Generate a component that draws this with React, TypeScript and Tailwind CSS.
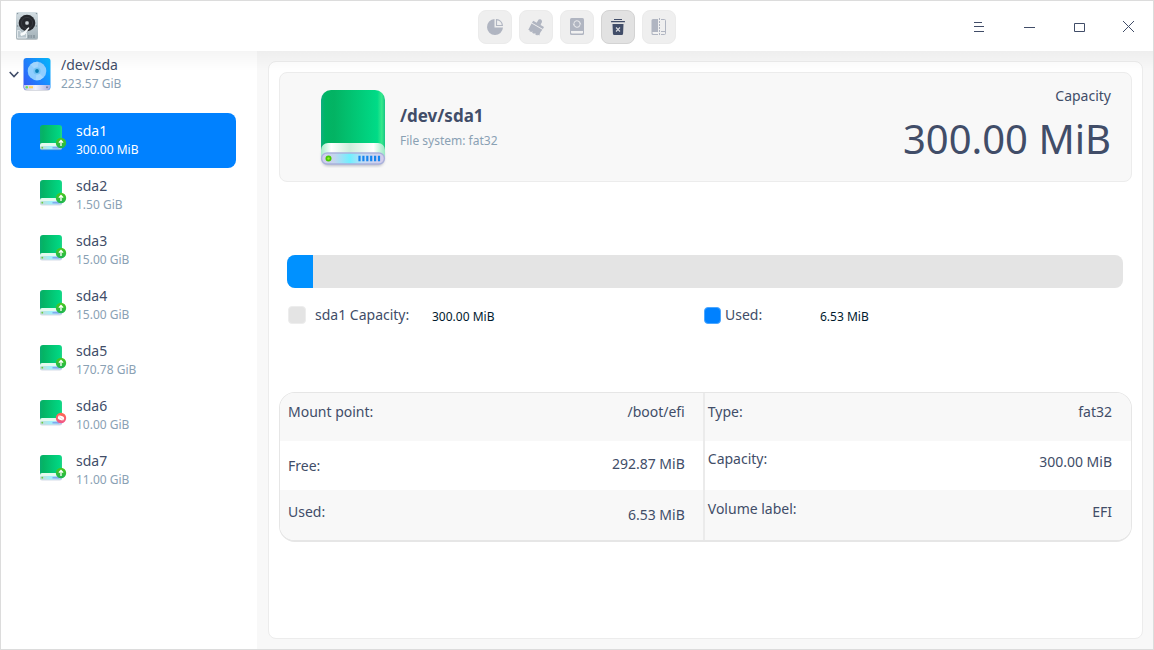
import React from "react";

type Status = "mounted" | "hidden";

interface Partition {
  name: string;
  size: string;
  status: Status;
}

const partitions: Partition[] = [
  { name: "sda1", size: "300.00 MiB", status: "mounted" },
  { name: "sda2", size: "1.50 GiB", status: "mounted" },
  { name: "sda3", size: "15.00 GiB", status: "mounted" },
  { name: "sda4", size: "15.00 GiB", status: "mounted" },
  { name: "sda5", size: "170.78 GiB", status: "mounted" },
  { name: "sda6", size: "10.00 GiB", status: "hidden" },
  { name: "sda7", size: "11.00 GiB", status: "mounted" },
];

function AppLogo() {
  return (
    <svg width="24" height="30" viewBox="0 0 24 30" aria-hidden="true">
      <defs>
        <linearGradient id="logo-case" x1="0" y1="0" x2="0" y2="1">
          <stop offset="0" stopColor="#d3dde2" />
          <stop offset="1" stopColor="#a3b1b8" />
        </linearGradient>
      </defs>
      <rect x="1" y="2" width="22" height="27" rx="2" fill="#7f8b92" opacity=".5" />
      <rect x="1" y="1" width="22" height="27" rx="2" fill="url(#logo-case)" />
      <g fill="#7f8d95">
        <circle cx="2.6" cy="2.6" r=".7" />
        <circle cx="21.4" cy="2.6" r=".7" />
        <circle cx="2.6" cy="15" r=".7" />
        <circle cx="21.4" cy="15" r=".7" />
      </g>
      <circle cx="12" cy="12" r="8.3" fill="#25272c" />
      <circle cx="12" cy="12" r="5.6" fill="none" stroke="#3b3e44" strokeWidth=".8" />
      <circle cx="12" cy="12" r="2" fill="#aeb4b9" />
      <circle cx="12" cy="12" r=".8" fill="#f2f4f5" />
      <path d="M2.500 19.500h2l2 2.500h5v5h-9z" fill="#b9c6cd" stroke="#eef3f5" strokeWidth=".8" />
      <path d="M13.400 16.300l1 .8-4.600 6.600-3.700 1.200-1-2.200 3.600-1.700z" fill="#f8fbfc" />
      <path d="M13 24h7v3h-7z" fill="#8d9ba3" />
      <path d="M15 24v3M17.500 24v3" stroke="#b5c1c7" strokeWidth=".6" />
    </svg>
  );
}

function DiskIcon() {
  return (
    <svg width="30" height="36" viewBox="0 0 30 36" aria-hidden="true">
      <defs>
        <linearGradient id="disk-body" x1="0" y1="1" x2="1" y2="0.200">
          <stop offset="0" stopColor="#3a52f2" />
          <stop offset=".55" stopColor="#1b86ff" />
          <stop offset="1" stopColor="#08b2ff" />
        </linearGradient>
        <linearGradient id="disk-base" x1="0" y1="0" x2="1" y2="0">
          <stop offset="0" stopColor="#c5c4e8" />
          <stop offset=".45" stopColor="#f1f2fb" />
          <stop offset="1" stopColor="#a9aee0" />
        </linearGradient>
      </defs>
      <rect x="2" y="4" width="26" height="31" rx="3" fill="#67708a" opacity=".25" />
      <rect x="1.500" y="2" width="27" height="32" rx="3" fill="url(#disk-body)" />
      <path d="M2 29h26v2a3 3 0 0 1-3 3H5a3 3 0 0 1-3-3z" fill="url(#disk-base)" />
      <circle cx="4.800" cy="31.300" r="1.200" fill="#6ade62" />
      <path d="M7 30.300h4v2H7z" fill="#ffd25a" />
      <circle cx="25" cy="31.300" r="1" fill="#777fa8" />
      <circle cx="15" cy="15" r="9.300" fill="#8fceff" />
      <path d="M15 15L8.500 8.400a9.300 9.300 0 0 1 8-2.600zM15 15l6.500 6.600a9.300 9.300 0 0 1-8 2.600z" fill="#a5d8ff" />
      <circle cx="15" cy="15" r="3.600" fill="#73c3f4" />
      <circle cx="15" cy="15" r="1.900" fill="#0a7fb7" />
    </svg>
  );
}

function PartitionIcon({ id }: { id: string }) {
  return (
    <svg width="68" height="82" viewBox="0 0 68 82" aria-hidden="true">
      <defs>
        <linearGradient id={`${id}-body`} x1="0" y1="0" x2="1" y2="0">
          <stop offset="0" stopColor="#0fae80" />
          <stop offset=".06" stopColor="#00b565" />
          <stop offset=".2" stopColor="#03b363" />
          <stop offset=".88" stopColor="#00db87" />
          <stop offset=".95" stopColor="#38e88d" />
          <stop offset="1" stopColor="#16c684" />
        </linearGradient>
        <linearGradient id={`${id}-lip`} x1="0" y1="0" x2="1" y2="0">
          <stop offset="0" stopColor="#a5ecc8" />
          <stop offset=".16" stopColor="#ffffff" />
          <stop offset=".45" stopColor="#ceeedd" />
          <stop offset=".82" stopColor="#ffffff" />
          <stop offset="1" stopColor="#98eac3" />
        </linearGradient>
        <linearGradient id={`${id}-base`} x1="0" y1="0" x2="1" y2="0">
          <stop offset="0" stopColor="#d3cdea" />
          <stop offset=".2" stopColor="#c4d5ee" />
          <stop offset=".45" stopColor="#6ff0ff" />
          <stop offset=".65" stopColor="#c3dcf4" />
          <stop offset="1" stopColor="#d5cbea" />
        </linearGradient>
        <filter id={`${id}-blur`}>
          <feGaussianBlur stdDeviation="1.500" />
        </filter>
      </defs>
      <rect x="3" y="60" width="62" height="18" rx="6" fill="#596078" opacity=".4" filter={`url(#${id}-blur)`} />
      <path d="M12 2h44a10 10 0 0 1 10 10v57H2V12A10 10 0 0 1 12 2z" fill={`url(#${id}-body)`} />
      <path d="M9 55h50a7 7 0 0 1 7 7v8H2v-8a7 7 0 0 1 7-7z" fill={`url(#${id}-lip)`} />
      <rect x="2.600" y="65" width="62.800" height="11" rx="5.500" fill={`url(#${id}-base)`} stroke="#a9b1dc" strokeWidth="1.400" />
      <circle cx="9.500" cy="70.500" r="3" fill="#45c900" />
      <circle cx="9.500" cy="70.500" r="1.200" fill="#93ef2b" />
      <path d="M40.500 67.700v5.600M44.400 67.700v5.600M48.300 67.700v5.600M52.200 67.700v5.600M56.100 67.700v5.600M60 67.700v5.600" stroke="#1685ee" strokeWidth="2.200" />
    </svg>
  );
}

function SmallPartitionIcon({ id, status }: { id: string; status: Status }) {
  return (
    <svg width="30" height="30" viewBox="0 0 30 30" aria-hidden="true">
      <defs>
        <linearGradient id={`${id}-body`} x1="0" y1="0" x2="1" y2="0">
          <stop offset="0" stopColor="#08ad70" />
          <stop offset=".15" stopColor="#05b464" />
          <stop offset=".9" stopColor="#00d783" />
          <stop offset="1" stopColor="#2ad489" />
        </linearGradient>
        <linearGradient id={`${id}-base`} x1="0" y1="0" x2="1" y2="0">
          <stop offset="0" stopColor="#c5ddd5" />
          <stop offset=".5" stopColor="#a0f0fb" />
          <stop offset="1" stopColor="#b5c9f1" />
        </linearGradient>
        <linearGradient id={`${id}-badge`} x1="0" y1="0" x2="0" y2="1">
          <stop offset="0" stopColor={status === "mounted" ? "#4cc81c" : "#ff6a4f"} />
          <stop offset="1" stopColor={status === "mounted" ? "#1db653" : "#f0568a"} />
        </linearGradient>
      </defs>
      <rect x="2" y="23" width="22" height="4.500" rx="2" fill="#7583b0" opacity=".3" />
      <path d="M5 2h16a3 3 0 0 1 3 3v18H2V5a3 3 0 0 1 3-3z" fill={`url(#${id}-body)`} />
      <path d="M4 20h18a2 2 0 0 1 2 2v2H2v-2a2 2 0 0 1 2-2z" fill="#e5faef" />
      <rect x="2" y="23" width="22" height="3.600" rx="1.600" fill={`url(#${id}-base)`} />
      <circle cx="4.300" cy="24.700" r=".9" fill="#6bcb3e" />
      <path d="M14.500 24.700h6.500" stroke="#82a9ef" strokeWidth="1.500" />
      <circle cx="23" cy="20" r="5.200" fill={`url(#${id}-badge)`} />
      {status === "mounted" ? (
        <path d="M23 23v-5.200M20.900 19.600L23 17.500l2.100 2.100" fill="none" stroke="#fff" strokeWidth="1.300" />
      ) : (
        <g>
          <ellipse cx="23" cy="20" rx="3.200" ry="2.200" fill="#fff" transform="rotate(20 23 20)" />
          <path d="M20.500 18l5 4" stroke="#fbc9cc" strokeWidth=".8" />
        </g>
      )}
    </svg>
  );
}

function PieIcon() {
  return (
    <svg width="18" height="18" viewBox="0 0 18 18" aria-hidden="true">
      <path d="M8.500 1A8 8 0 1 0 17 9.500H8.500z" fill="currentColor" />
      <path d="M10.500 1.600v5.900h5.900a6.300 6.300 0 0 0-5.900-5.900z" fill="none" stroke="currentColor" strokeWidth="1.100" />
    </svg>
  );
}

function BrushIcon() {
  return (
    <svg width="18" height="18" viewBox="0 0 18 18" fill="currentColor" aria-hidden="true">
      <path d="M11 2.200a2.100 2.100 0 0 1 4 .9c0 .9-.5 1.400-.9 2.200l-.5 1.300 3.400 2-1.100 2L5 4.400l1.200-2 3.500 2z" transform="translate(0 .3)" />
      <path d="M4.600 5.600l10.800 6.200c-1.500 1.700-2.600 3-3 5.700l-1.500-.7-.7.700-2.100-1.200.5-1.400-1.600.9-1.900-1.100.7-1.200-1.700.6-1.900-1.100.6-1-1.500-.1C2.200 10 3.500 8 4.600 5.600z" />
    </svg>
  );
}

function FormatIcon() {
  return (
    <svg width="18" height="18" viewBox="0 0 18 18" aria-hidden="true">
      <path d="M3.500 0h11A1.500 1.500 0 0 1 16 1.500v14a1.500 1.500 0 0 1-1.500 1.500h-11A1.500 1.500 0 0 1 2 15.500v-14A1.500 1.500 0 0 1 3.500 0z" fill="currentColor" />
      <path d="M3 13h12v1.500a1 1 0 0 1-1 1H4a1 1 0 0 1-1-1z" fill="#f1f1f1" />
      <circle cx="9" cy="6" r="3.200" fill="none" stroke="#e6e7ea" strokeWidth="1.100" strokeDasharray="8.500 1.550" transform="rotate(-160 9 6)" />
      <path d="M4.600 5.500l1.200 1.800 1.200-1.800zM11 6.500l1.200-1.800 1.200 1.800z" fill="#e6e7ea" />
    </svg>
  );
}

function TrashIcon() {
  return (
    <svg width="18" height="18" viewBox="0 0 18 18" fill="currentColor" aria-hidden="true">
      <path d="M5 1h8v1H5zM2 3.500A.5.5 0 0 1 2.500 3h13a.5.5 0 0 1 .5.5V4.200H2z" />
      <path d="M3.500 6h11l-.4 9.500a1.500 1.500 0 0 1-1.500 1.500H5.400a1.500 1.500 0 0 1-1.500-1.500z" />
      <path d="M7 9.500l4 4M11 9.500l-4 4" stroke="#d9dbe0" strokeWidth="1.100" />
    </svg>
  );
}

function ResizeIcon() {
  return (
    <svg width="18" height="18" viewBox="0 0 18 18" aria-hidden="true">
      <path d="M3 1h5v16H3a1.500 1.500 0 0 1-1.500-1.500v-13A1.500 1.500 0 0 1 3 1z" fill="currentColor" />
      <path d="M2.500 14H8v2H3.500a1 1 0 0 1-1-1z" fill="#f1f1f1" />
      <path d="M9.500 0v18" stroke="currentColor" strokeDasharray="2 1" />
      <path d="M11 1.500h3.500a1 1 0 0 1 1 1v13a1 1 0 0 1-1 1H11M11 13.500h4" fill="none" stroke="currentColor" />
    </svg>
  );
}

const tools = [
  { label: "Partition", icon: <PieIcon />, enabled: false },
  { label: "Wipe", icon: <BrushIcon />, enabled: false },
  { label: "Format", icon: <FormatIcon />, enabled: false },
  { label: "Unmount", icon: <TrashIcon />, enabled: true },
  { label: "Resize", icon: <ResizeIcon />, enabled: false },
];

const windowControls = [
  { label: "Menu", path: "M2 1.500h8M2 5.500h10M2 10.500h10" },
  { label: "Minimize", path: "M2 6.500h11" },
  { label: "Maximize", path: "M2.500 2.500h10v8h-10z" },
  { label: "Close", path: "M1 0l11 11M12 0L1 11" },
];

const cell = "align-middle font-normal";
const labelLeft = "w-[24.9%] pl-2 text-left";
const valueLeft = "w-[24.9%] pr-[18px] text-right";
const labelRight = "w-[25.1%] border-l-2 border-[#ebebeb] pl-[3px] text-left";
const valueRight = "w-[25.1%] pr-[19px] text-right";

export default function App() {
  return (
    <div className="flex min-h-screen flex-col border border-[#dcdcdc] bg-white font-['Noto_Sans',sans-serif] text-sm text-[#414d68]">
      <header className="grid h-[50px] grid-cols-[1fr_auto_1fr] items-center">
        <div className="pl-3.5">
          <AppLogo />
        </div>
        <div className="flex gap-[7px] pt-0.5" role="toolbar" aria-label="Disk actions">
          {tools.map((tool) => (
            <button
              key={tool.label}
              type="button"
              aria-label={tool.label}
              disabled={!tool.enabled}
              className={
                tool.enabled
                  ? "flex size-[34px] items-center justify-center rounded-lg border border-[#d3d3d3] bg-[#e2e2e2] text-[#414d68]"
                  : "flex size-[34px] items-center justify-center rounded-lg border border-[#ebebeb] bg-[#efefef] text-[#b0b5c1]"
              }
            >
              {tool.icon}
            </button>
          ))}
        </div>
        <div className="flex justify-end">
          {windowControls.map((control) => (
            <button
              key={control.label}
              type="button"
              aria-label={control.label}
              className="flex h-[50px] w-[50px] items-center justify-center pt-0.5"
            >
              <svg width="13" height="13" viewBox="0 0 13 13" fill="none" stroke="currentColor" className="overflow-visible" aria-hidden="true">
                <path d={control.path} />
              </svg>
            </button>
          ))}
        </div>
      </header>

      <div className="relative flex flex-1">
        <nav className="w-64 shrink-0 pr-[21px] pl-2.5" aria-label="Devices">
          <button type="button" className="mb-4 flex h-[46px] w-full items-center text-left" aria-expanded="true">
            <svg width="10" height="7" viewBox="0 0 10 7" fill="none" stroke="currentColor" strokeWidth="1.600" className="-ml-0.5" aria-hidden="true">
              <path d="M.7 1L5 5.500 9.300 1" />
            </svg>
            <span className="ml-[3px]">
              <DiskIcon />
            </span>
            <span className="ml-[9px] flex flex-col">
              <span className="leading-[19px]">/dev/sda</span>
              <span className="text-xs leading-[19px] text-[#8aa1b4]">223.57 GiB</span>
            </span>
          </button>
          <ul>
            {partitions.map((partition, index) => (
              <li key={partition.name}>
                <button
                  type="button"
                  aria-current={index === 0}
                  className={
                    index === 0
                      ? "flex h-[55px] w-full items-center rounded-lg bg-[#0081ff] pb-1 pl-[27px] text-left text-white"
                      : "flex h-[55px] w-full items-center rounded-lg pb-1 pl-[27px] text-left"
                  }
                >
                  <span className="pb-px">
                    <SmallPartitionIcon id={partition.name} status={partition.status} />
                  </span>
                  <span className="ml-2 flex flex-col pt-1">
                    <span className="leading-[18px]">{partition.name}</span>
                    <span className={index === 0 ? "text-xs leading-[20px]" : "text-xs leading-[20px] text-[#8aa1b4]"}>
                      {partition.size}
                    </span>
                  </span>
                </button>
              </li>
            ))}
          </ul>
        </nav>

        <main className="flex min-w-0 flex-1 flex-col bg-[#f8f8f8] py-2.5 pr-2.5 pl-[11px]">
          <div className="flex-1 rounded-lg border border-[#ececec] bg-white p-2.5">
            <section className="flex h-[110px] items-center rounded-lg border border-[#ececec] bg-[#f8f8f8] pr-5 pl-[39px]">
              <div className="pt-1">
                <PartitionIcon id="current" />
              </div>
              <div className="ml-[13px] flex-1 pt-1">
                <h1 className="text-[17px] leading-6 font-bold">/dev/sda1</h1>
                <p className="text-xs leading-[26px] text-[#8aa1b4]">File system: fat32</p>
              </div>
              <div className="pt-1 text-right">
                <p className="leading-5">Capacity</p>
                <p className="text-[40px] leading-[66px]">300.00 MiB</p>
              </div>
            </section>

            <section className="mt-[73px] pr-[9px] pl-2" aria-label="Usage">
              <div className="h-[33px] overflow-hidden rounded-lg bg-[#e4e4e4]">
                <div className="h-full w-[3.1%] bg-[#0091ff]" />
              </div>
              <dl className="mt-[17px] grid grid-cols-2">
                <div className="flex items-center">
                  <span className="ml-px size-[18px] rounded border border-[#ededed] bg-[#e4e4e4]" />
                  <dt className="ml-[9px] w-[117px] leading-5">sda1 Capacity:</dt>
                  <dd className="pt-1 text-xs text-[#001a2e]">300.00 MiB</dd>
                </div>
                <div className="flex items-center">
                  <span className="-ml-px size-[17px] rounded border border-[#4da7ff] bg-[#0081ff]" />
                  <dt className="ml-1 w-[95px] leading-5">Used:</dt>
                  <dd className="pt-1 text-xs text-[#001a2e]">6.53 MiB</dd>
                </div>
              </dl>
            </section>

            <section className="mt-[67px] overflow-hidden rounded-2xl border border-b-2 border-[#e6e6e6]" aria-label="Partition details">
              <table className="w-full table-fixed border-collapse">
                <tbody>
                  <tr className="h-12 bg-[#f8f8f8]">
                    <th scope="row" className={`${cell} ${labelLeft} pb-2.5`}>Mount point:</th>
                    <td className={`${cell} ${valueLeft} pb-2.5`}>/boot/efi</td>
                    <th scope="row" className={`${cell} ${labelRight} pb-2.5`}>Type:</th>
                    <td className={`${cell} ${valueRight} pb-2.5`}>fat32</td>
                  </tr>
                  <tr className="h-[49px]">
                    <th scope="row" className={`${cell} ${labelLeft}`}>Free:</th>
                    <td className={`${cell} ${valueLeft} pb-1`}>292.87 MiB</td>
                    <th scope="row" className={`${cell} ${labelRight} pb-3.5`}>Capacity:</th>
                    <td className={`${cell} ${valueRight} pb-2`}>300.00 MiB</td>
                  </tr>
                  <tr className="h-[50px] bg-[#f8f8f8]">
                    <th scope="row" className={`${cell} ${labelLeft} pb-1.5`}>Used:</th>
                    <td className={`${cell} ${valueLeft}`}>6.53 MiB</td>
                    <th scope="row" className={`${cell} ${labelRight} pb-3`}>Volume label:</th>
                    <td className={`${cell} ${valueRight} pb-1.5`}>EFI</td>
                  </tr>
                </tbody>
              </table>
            </section>
          </div>
        </main>
        <div className="pointer-events-none absolute inset-x-0 top-0 h-5 bg-linear-to-b from-black/4 to-transparent" />
      </div>
    </div>
  );
}
